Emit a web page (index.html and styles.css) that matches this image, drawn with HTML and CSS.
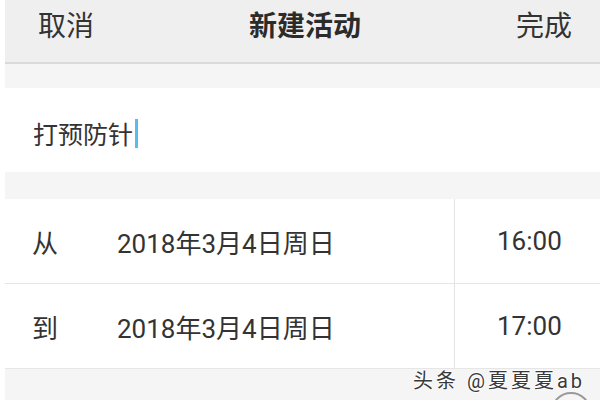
FILE: index.html
```html
<!DOCTYPE html>
<html lang="zh-CN">
<head>
    <meta charset="UTF-8">
    <meta name="viewport" content="width=device-width, initial-scale=1.0">
    <title>新建活动</title>
    <link rel="stylesheet" href="styles.css">
</head>
<body>
<div class="screen">
    <div class="topbar">
        <span class="top-left">取消</span>
        <span class="top-title">新建活动</span>
        <span class="top-right">完成</span>
    </div>

    <div class="gap"></div>

    <div class="title-row">
        <span>打预防针</span><span class="cursor"></span>
    </div>

    <div class="gap gap-mid"></div>

    <div class="time-row">
        <div class="time-main">
            <span class="label">从</span>
            <span class="date">2018年3月4日周日</span>
        </div>
        <div class="time-hour">16:00</div>
    </div>
    <div class="time-row">
        <div class="time-main">
            <span class="label">到</span>
            <span class="date">2018年3月4日周日</span>
        </div>
        <div class="time-hour">17:00</div>
    </div>

    <div class="bottom"></div>

    <!-- watermark over the bottom strip -->
    <div class="watermark">头条 @夏夏夏ab</div>
    <div class="ring"></div>
</div>
</body>
</html>
```

FILE: styles.css
```css
body {
    margin: 0;
    padding: 0;
    background-color: #fff;
    font-family: Roboto, "Noto Sans CJK SC", sans-serif;
    color: #333;
    overflow: hidden;
}
.screen {
    position: relative;
    margin-left: 5px;
    height: 400px;
    overflow: hidden;
}
.topbar {
    display: grid;
    grid-template-columns: 1fr auto 1fr;
    align-items: center;
    height: 64px;
    padding: 0 28px 9px 33px;
    background-color: #efefef;
    border-bottom: 2px solid #dadada;
    font-size: 28px;
    line-height: 1;
    box-sizing: border-box;
}
.top-title {
    font-weight: bold;
    color: #2b2b2b;
}
.top-right {
    justify-self: end;
}
.gap {
    height: 24px;
    background-color: #f5f5f5;
}
.gap-mid {
    height: 27px;
}
.title-row {
    display: flex;
    align-items: center;
    height: 84px;
    padding-left: 28px;
    padding-top: 6px;
    font-size: 25px;
    box-sizing: border-box;
}
.cursor {
    display: inline-block;
    width: 3px;
    height: 29px;
    margin-left: 2px;
    background-color: #58bde8;
}
.time-row {
    display: flex;
    height: 84px;
    border-bottom: 1px solid #e6e6e6;
    font-size: 26px;
}
.time-row:last-of-type {
    border-bottom: none;
}
.time-main {
    flex: 1;
    display: flex;
    align-items: center;
    padding-left: 27px;
    border-right: 1px solid #e3e3e3;
}
.label {
    width: 85px;
}
.time-hour {
    width: 145px;
    display: flex;
    align-items: center;
    padding-left: 42px;
    box-sizing: border-box;
}
.bottom {
    height: 40px;
    background-color: #f5f5f5;
}
.watermark {
    position: absolute;
    left: 408px;
    top: 365px;
    font-size: 20px;
    letter-spacing: 3px;
    color: #3a3a3a;
    text-shadow: 1px 0 #fff, -1px 0 #fff, 0 1px #fff, 0 -1px #fff;
}
.ring {
    position: absolute;
    left: 546px;
    top: 392px;
    width: 36px;
    height: 36px;
    border: 2px solid #9a9a9a;
    border-radius: 50%;
}
```
